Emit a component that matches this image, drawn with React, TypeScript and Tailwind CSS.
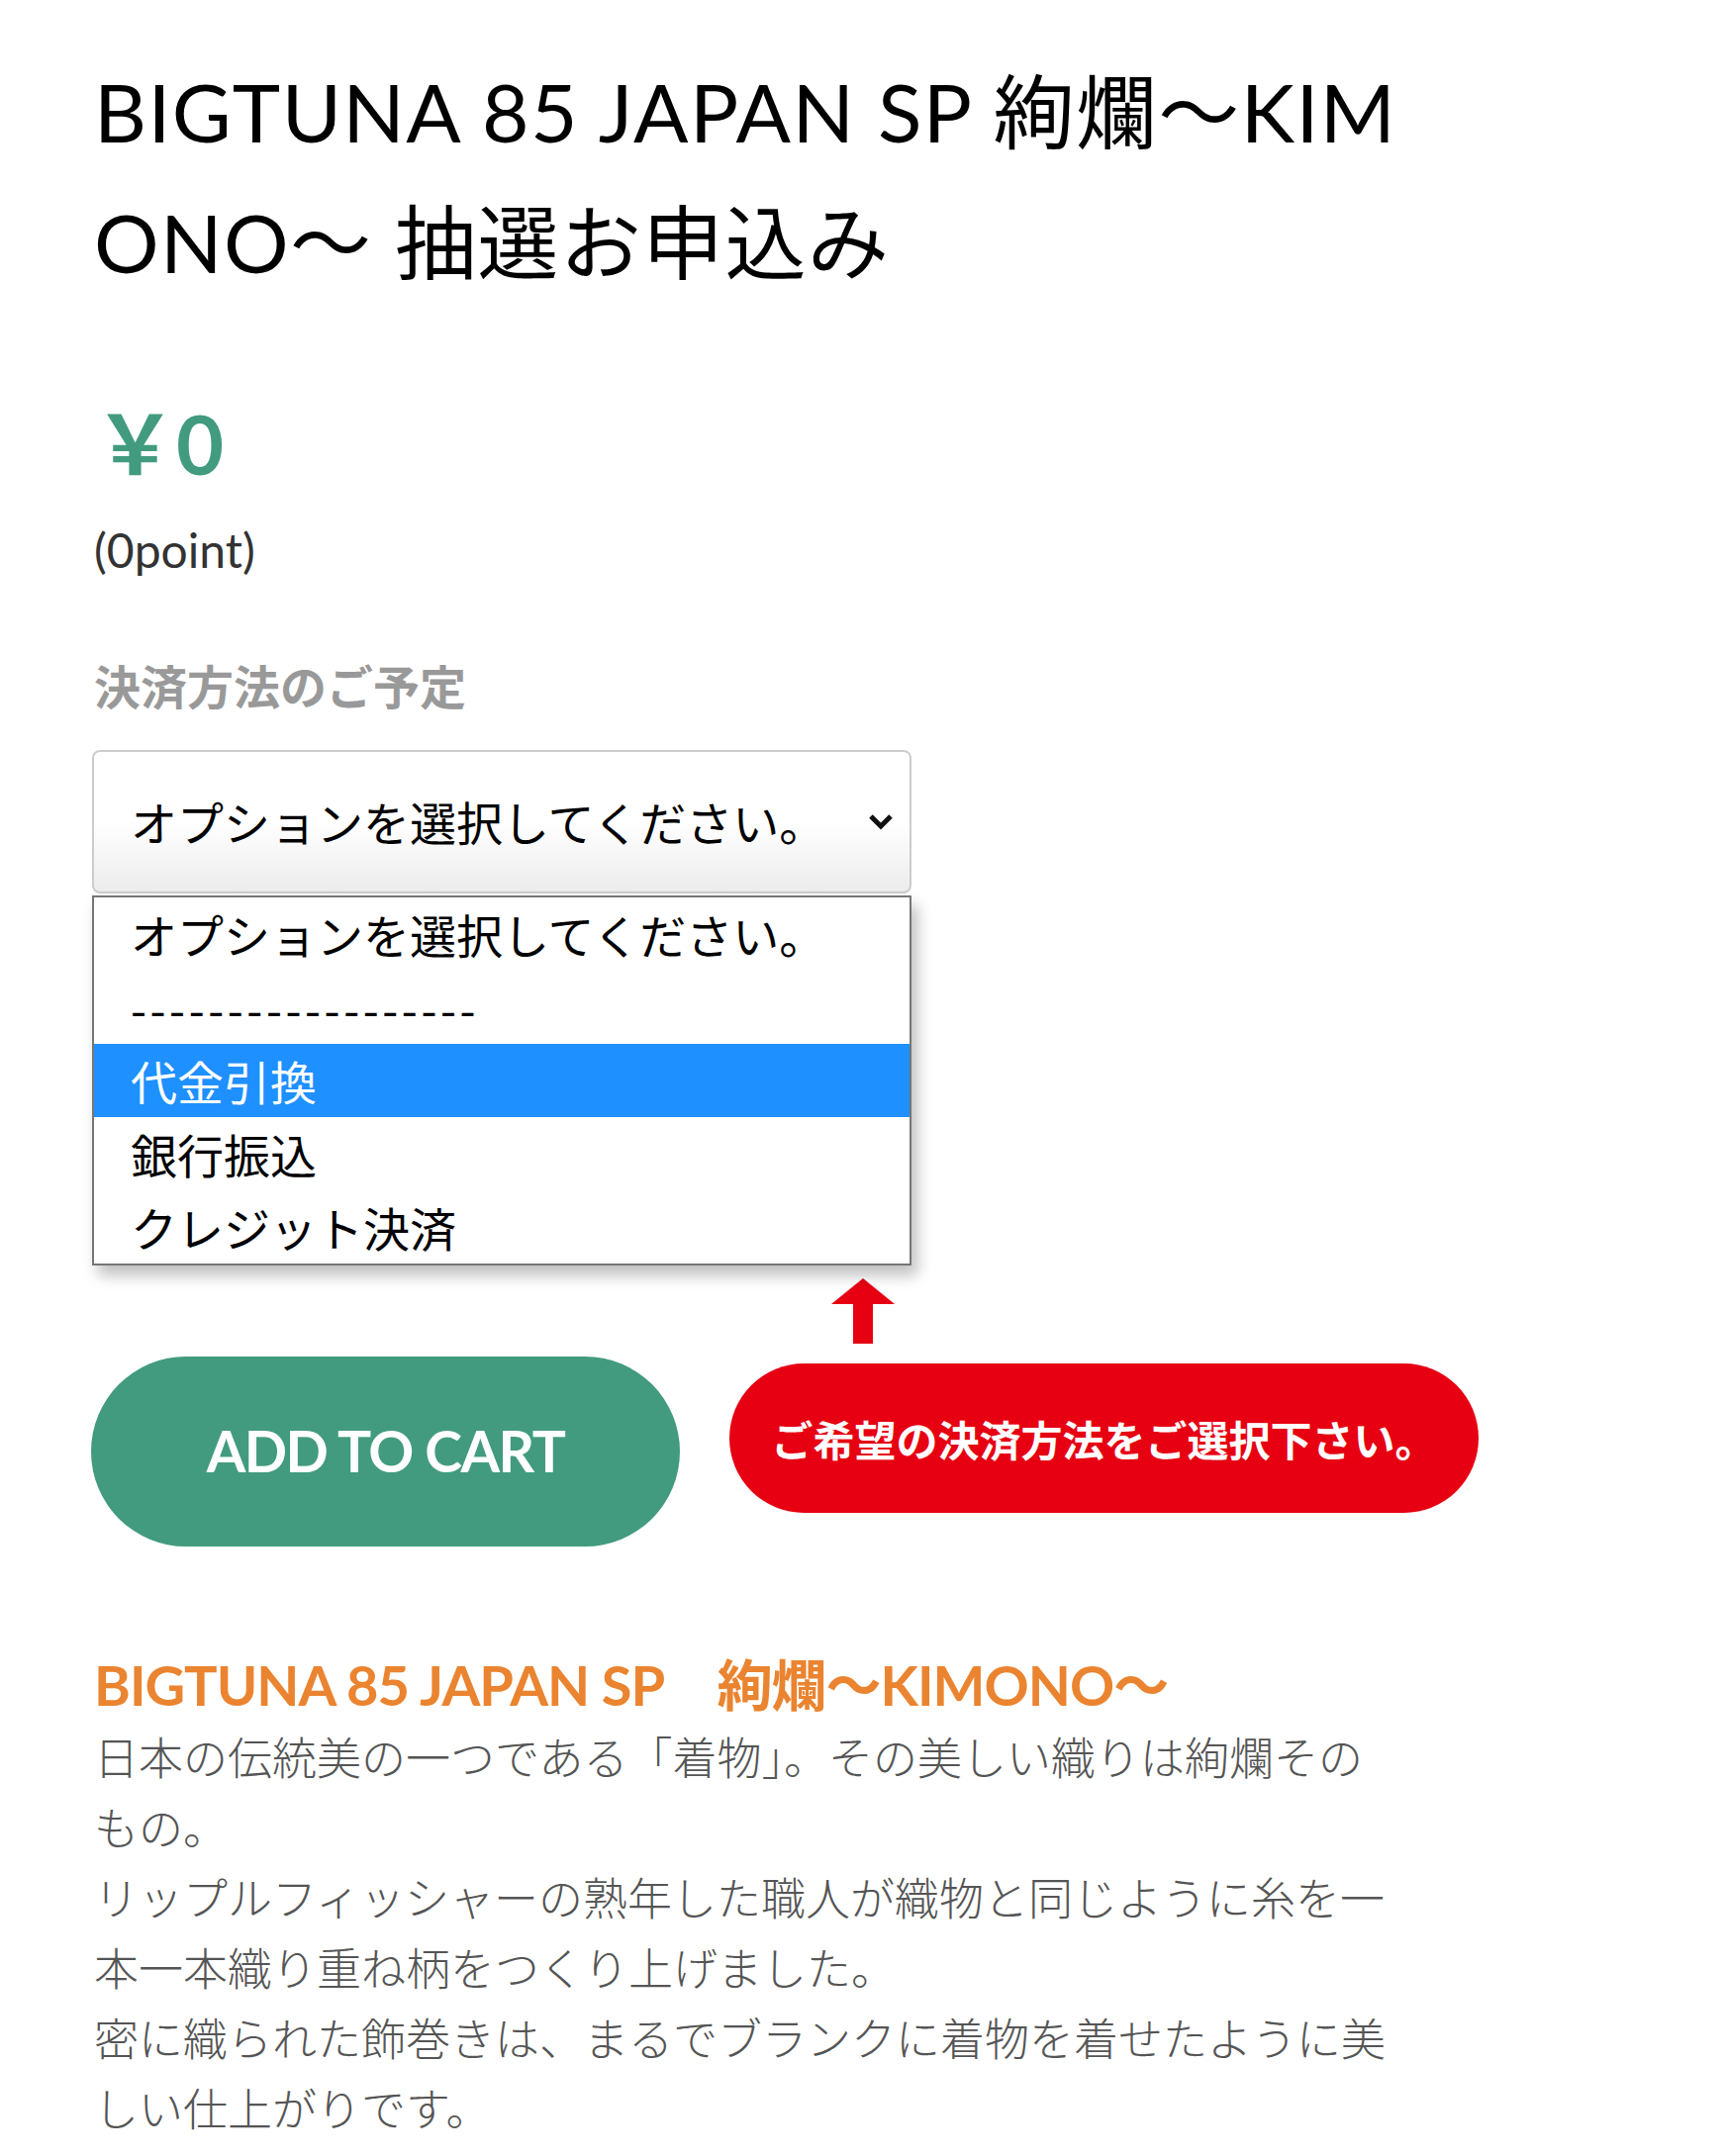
import React from 'react';

const options = ['オプションを選択してください。', '------------------', '代金引換', '銀行振込', 'クレジット決済'];

const PaymentSelect: React.FC = () => {
  return (
    <div className="relative w-[828px] font-[family-name:'Noto_Sans_CJK_JP',sans-serif]">
      {/* closed select */}
      <div className="h-[145px] rounded-[8px] border-2 border-[#cccccc] bg-gradient-to-b from-white via-white to-[#ececec] flex items-center justify-between pl-[37px] pr-[16px]">
        <span className="text-[47px] text-black">オプションを選択してください。</span>
        <svg width="26" height="18" viewBox="0 0 26 18">
          <path d="M3 3 L13 13 L23 3" fill="none" stroke="#111" strokeWidth="5" />
        </svg>
      </div>

      {/* open option list */}
      <ul className="absolute left-0 top-[147px] w-[828px] border-2 border-[#767676] bg-white shadow-[6px_10px_14px_rgba(0,0,0,0.25)] z-10">
        {options.map((o, i) => (
          <li
            key={o}
            className={
              i === 2
                ? 'h-[74px] flex items-center pl-[37px] text-[47px] bg-[#1e90ff] text-white'
                : i === 1
                  ? 'h-[74px] flex items-center pl-[37px] text-[46px] text-black tracking-[3.6px]'
                  : 'h-[74px] flex items-center pl-[37px] text-[47px] text-black'
            }
          >
            {o}
          </li>
        ))}
      </ul>
    </div>
  );
};

export default function App() {
  return (
    <div className="min-h-screen bg-white font-[family-name:Lato,'Noto_Sans_CJK_JP',sans-serif]">
      <div className="w-[1330px] ml-[95px] pt-[46px]">
        <h1 className="text-[82px] leading-[132px] font-normal text-black break-all tracking-[1.4px]">
          BIGTUNA 85 JAPAN SP 絢爛～KIMONO～ 抽選お申込み
        </h1>

        {/* price */}
        <div className="mt-[88px] text-[83px] leading-[100px] font-bold text-[#429b7e]">￥0</div>
        <div className="mt-[28px] text-[48px] leading-[60px] text-[#333333]">(0point)</div>

        {/* payment method */}
        <div className="mt-[76px] text-[47px] leading-[60px] font-bold text-[#999999] font-[family-name:'Noto_Sans_CJK_JP',sans-serif]">
          決済方法のご予定
        </div>
        <div className="mt-[36px] -ml-[2px]">
          <PaymentSelect />
        </div>

        {/* cart + notice */}
        <div className="mt-[389px] flex items-start gap-[50px] -ml-[3px]">
          <button className="shrink-0 mt-[79px] w-[595px] h-[192px] rounded-full bg-[#429b7e] text-white text-[57px] font-bold tracking-[-1.5px]">
            ADD TO CART
          </button>
          <div className="shrink-0 flex flex-col">
            <svg width="64" height="66" viewBox="0 0 64 66" className="ml-[103px]">
              <polygon points="32,0 64,26 42,26 42,66 22,66 22,26 0,26" fill="#e60012" />
            </svg>
            <div className="mt-[20px] w-[757px] h-[151px] rounded-full bg-[#e60012] flex items-center justify-center text-white text-[42px] font-bold font-[family-name:'Noto_Sans_CJK_JP',sans-serif]">
              ご希望の決済方法をご選択下さい。
            </div>
          </div>
        </div>

        {/* description */}
        <h2 className="mt-[104px] text-[56px] leading-[72px] font-bold text-[#ea8430] tracking-[-1px]">
          BIGTUNA 85 JAPAN SP　絢爛～KIMONO～
        </h2>
        <p className="w-[1314px] text-[45px] leading-[71px] font-light text-[#555555] font-[family-name:'Noto_Sans_CJK_JP',sans-serif]">
          日本の伝統美の一つである「着物」。その美しい織りは絢爛そのもの。
          <br />
          リップルフィッシャーの熟年した職人が織物と同じように糸を一本一本織り重ね柄をつくり上げました。
          <br />
          密に織られた飾巻きは、まるでブランクに着物を着せたように美しい仕上がりです。
        </p>
      </div>
    </div>
  );
}
